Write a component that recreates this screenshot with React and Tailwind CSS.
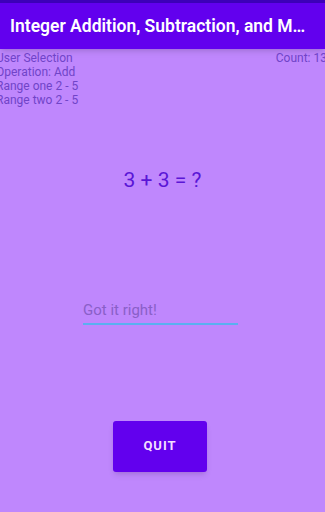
import React from 'react'

const App = () => {
  return (
    <div
      className="w-[325px] h-[512px] overflow-hidden bg-[#bf87fd] flex flex-col"
      style={{ fontFamily: 'Roboto, "Liberation Sans", sans-serif' }}
    >
      {/* Status strip + app bar */}
      <div className="h-[3px] bg-[#3d00b8]" />
      <div className="h-[46px] bg-[#6200ee] flex items-center pl-[10px] pr-[14px] shadow-md">
        <h1 className="text-white font-semibold text-[17.5px] truncate">
          Integer Addition, Subtraction, and Multiplication
        </h1>
      </div>

      {/* Info rows */}
      <div className="flex justify-between pt-[2px] text-[12px] leading-[14px] text-[#7044c8]">
        <div className="-ml-[4px]">
          <p>User Selection</p>
          <p>Operation: Add</p>
          <p>Range one 2 - 5</p>
          <p>Range two 2 - 5</p>
        </div>
        <p className="-mr-[2px] pl-1">Count: 13</p>
      </div>

      {/* Equation */}
      <p className="mt-[58px] text-center text-[21px] text-[#5a16d6]">3 + 3 = ?</p>

      {/* Result field */}
      <div className="mt-[104px] ml-[83px] w-[155px]">
        <p className="text-[15px] leading-[18px] text-[#8a5fc8]">Got it right!</p>
        <div className="mt-[4px] h-[2px] bg-[#5ab0f0]" />
      </div>

      {/* Quit button */}
      <div className="mt-[96px] flex justify-center pr-[5px]">
        <button className="w-[94px] h-[51px] rounded-[3px] bg-[#6200ee] text-[#f3dfff] text-[13px] font-bold tracking-[1px] shadow-md">
          QUIT
        </button>
      </div>
    </div>
  )
}

export default App
